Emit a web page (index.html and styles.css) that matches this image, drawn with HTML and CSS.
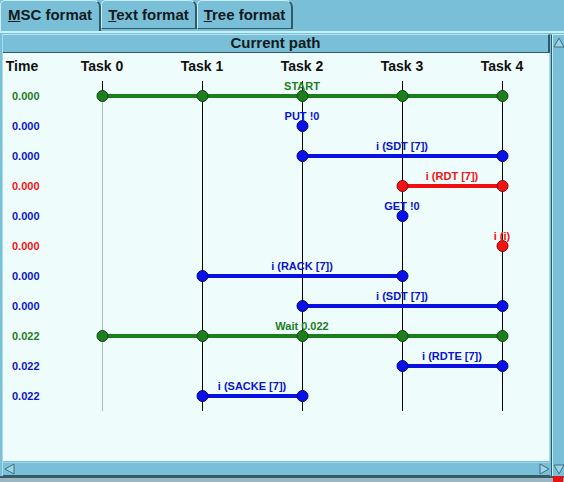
FILE: index.html
```html
<!DOCTYPE html>
<html>
<head>
<meta charset="utf-8">
<link rel="stylesheet" href="styles.css">
</head>
<body>
<div class="app">
  <div class="tabs">
    <div class="tab active"><span class="u">M</span>SC format</div>
    <div class="tab"><span class="u">T</span>ext format</div>
    <div class="tab"><span class="u">T</span>ree format</div>
  </div>
  <div class="panel">
    <div class="main">
      <div class="content">
        <div class="title">Current path</div>
        <svg class="chart" width="546" height="408" viewBox="3 53 546 408">
          <g class="hdr">
            <text x="22" y="71">Time</text>
            <text x="102" y="71">Task 0</text>
            <text x="202" y="71">Task 1</text>
            <text x="302" y="71">Task 2</text>
            <text x="402" y="71">Task 3</text>
            <text x="502" y="71">Task 4</text>
          </g>
          <g class="life">
            <line x1="102.5" y1="81" x2="102.5" y2="96" stroke="#000"/>
            <line x1="102.5" y1="96" x2="102.5" y2="411" stroke="#b0b8b8"/>
            <line x1="202.5" y1="81" x2="202.5" y2="411" stroke="#000"/>
            <line x1="302.5" y1="81" x2="302.5" y2="411" stroke="#000"/>
            <line x1="402.5" y1="81" x2="402.5" y2="411" stroke="#000"/>
            <line x1="502.5" y1="81" x2="502.5" y2="411" stroke="#000"/>
          </g>
          <g class="time">
            <text x="12" y="100" class="tg">0.000</text>
            <text x="12" y="130" class="tb">0.000</text>
            <text x="12" y="160" class="tb">0.000</text>
            <text x="12" y="190" class="tr">0.000</text>
            <text x="12" y="220" class="tb">0.000</text>
            <text x="12" y="250" class="tr">0.000</text>
            <text x="12" y="280" class="tb">0.000</text>
            <text x="12" y="310" class="tb">0.000</text>
            <text x="12" y="340" class="tg">0.022</text>
            <text x="12" y="370" class="tb">0.022</text>
            <text x="12" y="400" class="tb">0.022</text>
          </g>
          <g class="msg">
            <!-- START -->
            <line x1="102.5" y1="96" x2="502.5" y2="96" class="lg"/>
            <circle cx="102.5" cy="96" r="5.5" class="dg"/>
            <circle cx="202.5" cy="96" r="5.5" class="dg"/>
            <circle cx="302.5" cy="96" r="5.5" class="dg"/>
            <circle cx="402.5" cy="96" r="5.5" class="dg"/>
            <circle cx="502.5" cy="96" r="5.5" class="dg"/>
            <text x="302" y="90" class="tg">START</text>
            <!-- PUT -->
            <circle cx="302.5" cy="126" r="5.5" class="db"/>
            <text x="302" y="120" class="tb">PUT !0</text>
            <!-- SDT -->
            <line x1="302.5" y1="156" x2="502.5" y2="156" class="lb"/>
            <circle cx="302.5" cy="156" r="5.5" class="db"/>
            <circle cx="502.5" cy="156" r="5.5" class="db"/>
            <text x="402" y="150" class="tb">i (SDT [7])</text>
            <!-- RDT -->
            <line x1="402.5" y1="186" x2="502.5" y2="186" class="lr"/>
            <circle cx="402.5" cy="186" r="5.5" class="dr"/>
            <circle cx="502.5" cy="186" r="5.5" class="dr"/>
            <text x="452" y="180" class="tr">i (RDT [7])</text>
            <!-- GET -->
            <circle cx="402.5" cy="216" r="5.5" class="db"/>
            <text x="402" y="210" class="tb">GET !0</text>
            <!-- i (i) -->
            <circle cx="502.5" cy="246" r="5.5" class="dr"/>
            <text x="502" y="240" class="tr">i (i)</text>
            <!-- RACK -->
            <line x1="202.5" y1="276" x2="402.5" y2="276" class="lb"/>
            <circle cx="202.5" cy="276" r="5.5" class="db"/>
            <circle cx="402.5" cy="276" r="5.5" class="db"/>
            <text x="302" y="270" class="tb">i (RACK [7])</text>
            <!-- SDT 2 -->
            <line x1="302.5" y1="306" x2="502.5" y2="306" class="lb"/>
            <circle cx="302.5" cy="306" r="5.5" class="db"/>
            <circle cx="502.5" cy="306" r="5.5" class="db"/>
            <text x="402" y="300" class="tb">i (SDT [7])</text>
            <!-- Wait -->
            <line x1="102.5" y1="336" x2="502.5" y2="336" class="lg"/>
            <circle cx="102.5" cy="336" r="5.5" class="dg"/>
            <circle cx="202.5" cy="336" r="5.5" class="dg"/>
            <circle cx="302.5" cy="336" r="5.5" class="dg"/>
            <circle cx="402.5" cy="336" r="5.5" class="dg"/>
            <circle cx="502.5" cy="336" r="5.5" class="dg"/>
            <text x="302" y="330" class="tg">Wait 0.022</text>
            <!-- RDTE -->
            <line x1="402.5" y1="366" x2="502.5" y2="366" class="lb"/>
            <circle cx="402.5" cy="366" r="5.5" class="db"/>
            <circle cx="502.5" cy="366" r="5.5" class="db"/>
            <text x="452" y="360" class="tb">i (RDTE [7])</text>
            <!-- SACKE -->
            <line x1="202.5" y1="396" x2="302.5" y2="396" class="lb"/>
            <circle cx="202.5" cy="396" r="5.5" class="db"/>
            <circle cx="302.5" cy="396" r="5.5" class="db"/>
            <text x="252" y="390" class="tb">i (SACKE [7])</text>
          </g>
        </svg>
        <div class="hscroll">
          <div class="arrow">
            <svg width="12" height="12" viewBox="0 0 12 12"><polygon points="10,1 10,11 1,6" fill="#9fd4e6" stroke="#3d6f80" stroke-width="1"/></svg>
          </div>
          <div class="track"></div>
          <div class="arrow">
            <svg width="12" height="12" viewBox="0 0 12 12"><polygon points="2,1 2,11 11,6" fill="#9fd4e6" stroke="#3d6f80" stroke-width="1"/></svg>
          </div>
        </div>
      </div>
      <div class="vscroll">
        <div class="varrow">
          <svg width="12" height="12" viewBox="0 0 12 12"><polygon points="1,11 11,11 6,2" fill="#9fd4e6" stroke="#3d6f80" stroke-width="1"/></svg>
        </div>
        <div class="vtrack"></div>
        <div class="varrow">
          <svg width="12" height="12" viewBox="0 0 12 12"><polygon points="1,1 11,1 6,10" fill="#9fd4e6" stroke="#3d6f80" stroke-width="1"/></svg>
        </div>
      </div>
    </div>
    <div class="bottom">
      <div class="grip"></div>
    </div>
  </div>
</div>
</body>
</html>
```

FILE: styles.css
```css
html, body {
  margin: 0;
  padding: 0;
}
body {
  width: 564px;
  height: 482px;
  overflow: hidden;
  background: #7abfd8;
  font-family: "Liberation Sans", Arial, sans-serif;
}
.app {
  width: 564px;
  height: 482px;
  display: flex;
  flex-direction: column;
}
.tabs {
  display: flex;
  height: 31px;
  box-sizing: border-box;
  padding-left: 0;
}
.tab {
  box-sizing: border-box;
  height: 29px;
  padding: 4px 0 0 0;
  text-align: center;
  font-weight: bold;
  font-size: 15px;
  color: #101a20;
  background: #7abfd8;
  border-top: 1px solid #c8eef8;
  border-left: 1px solid #c8eef8;
  border-right: 2px solid #2f5a6a;
  border-bottom: 1px solid #2f5a6a;
  border-radius: 5px 7px 0 0;
  line-height: 20px;
}
.tab:nth-child(1) { width: 101px; }
.tab:nth-child(2) { width: 96px; }
.tab:nth-child(3) { width: 96px; }
.tab.active {
  height: 31px;
  border-bottom: none;
}
.u { text-decoration: underline; }
.panel {
  flex: 1;
  display: flex;
  flex-direction: column;
  border-top: 2px solid #c8f0f8;
}
.main {
  flex: 1;
  display: flex;
  padding-left: 2px;
  padding-top: 1px;
}
.content {
  width: 547px;
  display: flex;
  flex-direction: column;
  border-left: 1px solid #a8dcec;
}
.title {
  height: 19px;
  box-sizing: border-box;
  background: #7abfd8;
  border-top: 1px solid #b8e6f4;
  border-bottom: 1px solid #2f5a6a;
  border-right: 2px solid #2f5a6a;
  text-align: center;
  font-weight: bold;
  font-size: 15px;
  line-height: 16px;
  color: #101a20;
}
.chart {
  display: block;
  background: #effcfc;
  border-right: 1px solid #a8dcec;
}
.hdr text {
  font-family: "Liberation Sans", Arial, sans-serif;
  font-weight: bold;
  font-size: 14px;
  fill: #101010;
  text-anchor: middle;
}
.time text {
  font-family: "Liberation Sans", Arial, sans-serif;
  font-weight: bold;
  font-size: 11px;
}
.msg text {
  font-family: "Liberation Sans", Arial, sans-serif;
  font-weight: bold;
  font-size: 11px;
  text-anchor: middle;
}
.tg { fill: #1c7d1c; }
.tb { fill: #0a14c8; }
.tr { fill: #ee1414; }
.lg { stroke: #1c7d1c; stroke-width: 4; }
.lb { stroke: #0a10e0; stroke-width: 4; }
.lr { stroke: #f01010; stroke-width: 4; }
.dg { fill: #1e7e1e; stroke: #0d4a0d; stroke-width: 1; }
.db { fill: #0a10e8; stroke: #04087a; stroke-width: 1; }
.dr { fill: #f01414; stroke: #8a0808; stroke-width: 1; }
.hscroll {
  height: 14px;
  display: flex;
  border-top: 1px solid #a0d4e4;
  border-bottom: 1px solid #2f5a6a;
  box-sizing: border-box;
  margin-top: 1px;
}
.arrow {
  width: 13px;
  display: flex;
  align-items: center;
  justify-content: center;
}
.track {
  flex: 1;
  background: #7abfd8;
}
.vscroll {
  width: 14px;
  margin-left: 1px;
  display: flex;
  flex-direction: column;
  border-left: 1px solid #2f5a6a;
  border-top: 1px solid #c8eef8;
  box-sizing: border-box;
}
.varrow {
  height: 13px;
  display: flex;
  align-items: center;
  justify-content: center;
  border-left: 1px solid #c8eef8;
}
.vtrack {
  flex: 1;
  border-left: 1px solid #c8eef8;
  border-right: 1px solid #5f9fb6;
}
.bottom {
  height: 7px;
  background: #9ab8c4;
  border-top: 2px solid #3c5a66;
  box-sizing: border-box;
  display: flex;
  justify-content: flex-end;
}
.grip {
  width: 10px;
  height: 7px;
  margin-top: -2px;
  margin-right: 1px;
  background: #e81010;
}
```
